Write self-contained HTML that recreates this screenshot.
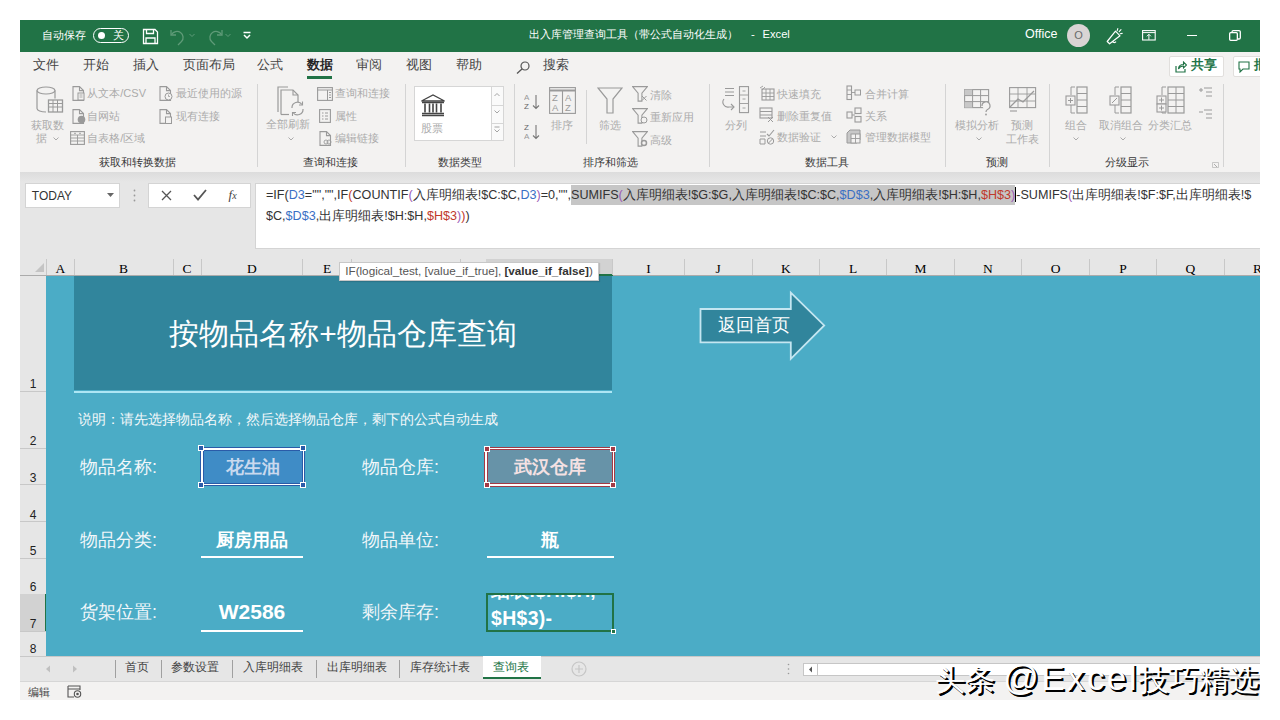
<!DOCTYPE html>
<html><head><meta charset="utf-8">
<style>
*{box-sizing:border-box;margin:0;padding:0}
html,body{width:1280px;height:720px;overflow:hidden;background:#fff;font-family:"Liberation Sans",sans-serif}
.a{position:absolute;white-space:nowrap}
#win{position:absolute;left:20px;top:20px;width:1240px;height:680px;overflow:hidden;background:#f3f2f1}
#title{position:absolute;left:0;top:0;width:1240px;height:32px;background:#217346;color:#fff}
#tabs{position:absolute;left:0;top:32px;width:1240px;height:28px;background:#f3f2f1;color:#444;font-size:12.5px}
#ribbon{position:absolute;left:0;top:60px;width:1240px;height:92px;background:#f3f2f1;color:#a6a6a6;font-size:11.5px}
.gl{position:absolute;color:#444;font-size:11.5px;top:75px}
.sep{position:absolute;width:1px;background:#d4d4d4;top:4px;height:83px}
#fbar{position:absolute;left:0;top:152px;width:1240px;height:104px;background:#e6e6e6}
#colh{position:absolute;left:0;top:239px;width:1240px;height:17px;background:#e6e6e6;font-family:"Liberation Serif",serif;font-size:13.5px;color:#000}
#grid{position:absolute;left:26px;top:256px;width:1214px;height:380px;background:#4bacc6;overflow:hidden}
#rowh{position:absolute;left:0;top:256px;width:26px;height:380px;background:#e6e6e6;font-size:12px;color:#222}
#stabs{position:absolute;left:0;top:636px;width:1240px;height:26px;background:#e6e6e6;font-size:12.5px;color:#444}
#status{position:absolute;left:0;top:662px;width:1240px;height:18px;background:#f3f2f1;font-size:11.5px;color:#444}
</style></head><body>
<div id="win">
  <div id="title">
    <div class="a" style="left:21.5px;top:7.5px;font-size:11.3px;line-height:15px">自动保存</div>
    <div class="a" style="left:73px;top:7.5px;width:36px;height:15px;border:1.3px solid #fff;border-radius:8px"></div>
    <div class="a" style="left:78px;top:11.5px;width:7px;height:7px;background:#fff;border-radius:50%"></div>
    <div class="a" style="left:93px;top:8px;font-size:11px;line-height:14px">关</div>
    <svg class="a" style="left:122px;top:8px" width="17" height="17" viewBox="0 0 17 17"><path d="M1.5 1.5h11.5l2.5 2.5v11.5h-14z" fill="none" stroke="#fff" stroke-width="1.3"/><path d="M4.5 1.5v4h7v-4M4 15.5v-5.5h9v5.5" fill="none" stroke="#fff" stroke-width="1.3"/></svg>
    <svg class="a" style="left:148px;top:8px" width="20" height="18" viewBox="0 0 20 18"><path d="M3 2v5h5" fill="none" stroke="#5f9b78" stroke-width="1.3"/><path d="M3.5 6.5c2-3 6-4 9-2s3.5 6.5 1 9l-3.5 3.5" fill="none" stroke="#5f9b78" stroke-width="1.3"/></svg>
    <svg class="a" style="left:169px;top:13px" width="6" height="5" viewBox="0 0 6 5"><path d="M0.5 1l2.5 2.5 2.5-2.5" fill="none" stroke="#5f9b78" stroke-width="1"/></svg>
    <svg class="a" style="left:185px;top:8px" width="20" height="18" viewBox="0 0 20 18"><path d="M17 2v5h-5" fill="none" stroke="#5f9b78" stroke-width="1.3"/><path d="M16.5 6.5c-2-3-6-4-9-2s-3.5 6.5-1 9l3.5 3.5" fill="none" stroke="#5f9b78" stroke-width="1.3"/></svg>
    <svg class="a" style="left:205px;top:13px" width="6" height="5" viewBox="0 0 6 5"><path d="M0.5 1l2.5 2.5 2.5-2.5" fill="none" stroke="#5f9b78" stroke-width="1"/></svg>
    <svg class="a" style="left:223px;top:11px" width="8" height="9" viewBox="0 0 8 9"><path d="M0.5 1.5h7M1 4l3 3 3-3" fill="none" stroke="#fff" stroke-width="1.5"/></svg>
    <div class="a" style="left:508.5px;top:7px;font-size:11.3px;line-height:15px">出入库管理查询工具（带公式自动化生成）</div><div class="a" style="left:731px;top:7px;font-size:11.5px;line-height:15px">-</div><div class="a" style="left:742.5px;top:7px;font-size:11.2px;line-height:15px">Excel</div>
    <div class="a" style="left:1005px;top:7px;font-size:12.5px;line-height:15px">Office</div>
    <div class="a" style="left:1047px;top:4px;width:23px;height:23px;border-radius:50%;background:#d9d4d4"></div>
    <div class="a" style="left:1047px;top:8px;width:23px;text-align:center;font-size:11px;line-height:15px;color:#6b6b6b">O</div>
    <svg class="a" style="left:1086px;top:8px" width="18" height="18" viewBox="0 0 18 18"><path d="M1.2 13.5L9.5 3.2L14 7.8L3.6 15.8Z" fill="none" stroke="#fff" stroke-width="1.2" stroke-linejoin="round"/><path d="M6.5 13.2a2 2 0 0 0 3.5 0.5" fill="none" stroke="#fff" stroke-width="1.2"/><path d="M11.2 2.6L11.8 0.6M13.2 3.6L15 1.6M14.2 5.8L16.2 5.4" stroke="#fff" stroke-width="1.1" stroke-linecap="round"/></svg>
    <svg class="a" style="left:1122px;top:10px" width="14" height="11" viewBox="0 0 14 11"><rect x="0.6" y="0.6" width="12.6" height="9.4" fill="none" stroke="#fff" stroke-width="1.1"/><path d="M0.6 2.6h12.6M6.9 9.8v-5.5M4.9 6.3l2-2 2 2" fill="none" stroke="#fff" stroke-width="1"/></svg>
    <div class="a" style="left:1167px;top:15px;width:10px;height:1.3px;background:#fff"></div>
    <svg class="a" style="left:1209px;top:10px" width="12" height="11" viewBox="0 0 12 11"><rect x="0.65" y="2.65" width="7.7" height="7.7" rx="1" fill="none" stroke="#fff" stroke-width="1.3"/><path d="M3 2.5v-0.5a1.3 1.3 0 0 1 1.3-1.3h5.7a1.3 1.3 0 0 1 1.3 1.3v5.7a1.3 1.3 0 0 1-1.3 1.3h-1" fill="none" stroke="#fff" stroke-width="1.3"/></svg>
  </div>
  <div id="tabs">
    <div class="a" style="left:13px;top:5px;line-height:16px">文件</div>
    <div class="a" style="left:63px;top:5px;line-height:16px">开始</div>
    <div class="a" style="left:113px;top:5px;line-height:16px">插入</div>
    <div class="a" style="left:162.5px;top:5px;line-height:16px">页面布局</div>
    <div class="a" style="left:237px;top:5px;line-height:16px">公式</div>
    <div class="a" style="left:287px;top:5px;line-height:16px;font-weight:bold;color:#262626">数据</div>
    <div class="a" style="left:287px;top:24px;width:25px;height:2.5px;background:#217346"></div>
    <div class="a" style="left:336px;top:5px;line-height:16px">审阅</div>
    <div class="a" style="left:386px;top:5px;line-height:16px">视图</div>
    <div class="a" style="left:435.5px;top:5px;line-height:16px">帮助</div>
    <svg class="a" style="left:496px;top:9px" width="15" height="13" viewBox="0 0 15 13"><circle cx="9" cy="5" r="4" fill="none" stroke="#555" stroke-width="1.2"/><path d="M6 8l-5 4.5" stroke="#555" stroke-width="1.3"/></svg>
    <div class="a" style="left:522.5px;top:5px;line-height:16px">搜索</div>
    <div class="a" style="left:1149px;top:4px;width:55px;height:20.5px;background:#fff;border:1px solid #e1dfdd;border-radius:2px"></div>
    <svg class="a" style="left:1155px;top:9px" width="12" height="12" viewBox="0 0 12 12"><path d="M1 5v6h9v-3" fill="none" stroke="#217346" stroke-width="1.2"/><path d="M3.5 8c0-3 2-4.5 5-4.5v-2.5l3 3-3 3v-2c-2 0-4 1-5 3z" fill="none" stroke="#217346" stroke-width="1.1"/></svg>
    <div class="a" style="left:1171px;top:5px;line-height:16px;font-weight:bold;color:#217346">共享</div>
    <div class="a" style="left:1213px;top:4px;width:40px;height:20.5px;background:#fff;border:1px solid #e1dfdd;border-radius:2px"></div>
    <svg class="a" style="left:1218px;top:9px" width="12" height="12" viewBox="0 0 12 12"><path d="M1 1h10v7h-6l-3 3v-3h-1z" fill="none" stroke="#217346" stroke-width="1.1"/></svg>
    <div class="a" style="left:1234px;top:5px;line-height:16px;font-weight:bold;color:#217346">批</div>
  </div>
  <div id="ribbon">
<div class="sep" style="left:237px"></div>
<div class="sep" style="left:385px"></div>
<div class="sep" style="left:494px"></div>
<div class="sep" style="left:689px"></div>
<div class="sep" style="left:925px"></div>
<div class="sep" style="left:1029px"></div>
<div class="sep" style="left:1203px"></div>
<div class="a" style="left:566px;top:10px;width:1px;height:54px;background:#d4d4d4"></div>
<div class="a" style="left:78.8px;top:75.0px;line-height:14px;font-size:11px;color:#383838">获取和转换数据</div>
<div class="a" style="left:282.5px;top:75.0px;line-height:14px;font-size:11px;color:#383838">查询和连接</div>
<div class="a" style="left:417.5px;top:75.0px;line-height:14px;font-size:11px;color:#383838">数据类型</div>
<div class="a" style="left:562.5px;top:75.0px;line-height:14px;font-size:11px;color:#383838">排序和筛选</div>
<div class="a" style="left:784.6px;top:75.0px;line-height:14px;font-size:11px;color:#383838">数据工具</div>
<div class="a" style="left:966px;top:75.0px;line-height:14px;font-size:11px;color:#383838">预测</div>
<div class="a" style="left:1085px;top:75.0px;line-height:14px;font-size:11px;color:#383838">分级显示</div>
<svg class="a" style="left:16px;top:6px" width="28" height="31" viewBox="0 0 28 31"><ellipse cx="10" cy="4.5" rx="9" ry="3.5" fill="none" stroke="#9a9a9a" stroke-width="1.2"/><path d="M1 4.5v18c0 2 4 3.5 9 3.5" fill="none" stroke="#9a9a9a" stroke-width="1.2"/><path d="M19 4.5v8" fill="none" stroke="#9a9a9a" stroke-width="1.2"/><rect x="12.5" y="14" width="14" height="12" fill="#f3f2f1" stroke="#9a9a9a" stroke-width="1.3"/><path d="M12.5 17.5h14M12.5 21h14M17 14v12M21.5 14v12" stroke="#9a9a9a" stroke-width="1"/></svg>
<div class="a" style="left:10.6px;top:38.0px;line-height:14px;font-size:11px;color:#ababab">获取数</div>
<div class="a" style="left:15.5px;top:51.0px;line-height:14px;font-size:11px;color:#ababab">据</div>
<svg class="a" style="left:33px;top:57px" width="6" height="4" viewBox="0 0 6 4"><path d="M0.5 0.5l2.5 2.5 2.5-2.5" fill="none" stroke="#ababab" stroke-width="1"/></svg>
<svg class="a" style="left:51.5px;top:6px" width="14" height="15" viewBox="0 0 14 15"><path d="M1 0.6h6.5l4 4v9.8h-10.5z M7.5 0.6v4h4" fill="#f3f2f1" stroke="#9a9a9a" stroke-width="1.1"/><rect x="6" y="7" width="6" height="7" fill="#f3f2f1" stroke="#9a9a9a" stroke-width="1"/><path d="M7.5 9h3M7.5 11h3" stroke="#9a9a9a" stroke-width="0.8"/></svg>
<div class="a" style="left:67.3px;top:6.0px;line-height:14px;font-size:11px;color:#ababab">从文本/CSV</div>
<svg class="a" style="left:51.5px;top:28.5px" width="14" height="15" viewBox="0 0 14 15"><path d="M1 0.6h6.5l4 4v9.8h-10.5z M7.5 0.6v4h4" fill="#f3f2f1" stroke="#9a9a9a" stroke-width="1.1"/><circle cx="9.5" cy="10.5" r="3.8" fill="#9a9a9a"/></svg>
<div class="a" style="left:67.3px;top:28.6px;line-height:14px;font-size:11px;color:#ababab">自网站</div>
<svg class="a" style="left:50px;top:51px" width="15" height="14" viewBox="0 0 15 14"><rect x="0.6" y="0.6" width="13.8" height="12.8" fill="none" stroke="#9a9a9a" stroke-width="1.1"/><path d="M0.6 4h13.8M0.6 7h13.8M0.6 10h13.8M7.5 4v9.4M4 2.3h2M9 2.3h2" stroke="#9a9a9a" stroke-width="0.9"/></svg>
<div class="a" style="left:67.3px;top:51.0px;line-height:14px;font-size:11px;color:#ababab">自表格/区域</div>
<svg class="a" style="left:139px;top:6px" width="14" height="15" viewBox="0 0 14 15"><path d="M1 0.6h6.5l4 4v9.8h-10.5z M7.5 0.6v4h4" fill="#f3f2f1" stroke="#9a9a9a" stroke-width="1.1"/><circle cx="9.5" cy="10.5" r="3.5" fill="#f3f2f1" stroke="#9a9a9a" stroke-width="1"/><path d="M9.5 8.5v2h1.5" fill="none" stroke="#9a9a9a" stroke-width="0.8"/></svg>
<div class="a" style="left:155.5px;top:6.0px;line-height:14px;font-size:11px;color:#ababab">最近使用的源</div>
<svg class="a" style="left:139px;top:28.5px" width="14" height="15" viewBox="0 0 14 15"><path d="M1 0.6h6.5l4 4v9.8h-10.5z M7.5 0.6v4h4" fill="#f3f2f1" stroke="#9a9a9a" stroke-width="1.1"/><rect x="6.5" y="8" width="6" height="6.5" fill="#f3f2f1" stroke="#9a9a9a" stroke-width="1"/></svg>
<div class="a" style="left:155.5px;top:28.6px;line-height:14px;font-size:11px;color:#ababab">现有连接</div>
<svg class="a" style="left:257px;top:6px" width="29" height="30" viewBox="0 0 29 30"><path d="M1 26v-25h10" fill="none" stroke="#9a9a9a" stroke-width="1.2"/><path d="M4 28.5v-24.5h12l5 5v7" fill="#f3f2f1" stroke="#9a9a9a" stroke-width="1.2"/><path d="M16 4v5h5" fill="none" stroke="#9a9a9a" stroke-width="1.1"/><path d="M4 28.5h8" fill="none" stroke="#9a9a9a" stroke-width="1.2"/><path d="M15 22a5.5 5.5 0 0 1 10-3.5M26 23a5.5 5.5 0 0 1-10 3.5" fill="none" stroke="#9a9a9a" stroke-width="1.2"/><path d="M25.5 15.5v3.5h-3.5M15.5 30v-3.5h3.5" fill="none" stroke="#9a9a9a" stroke-width="1.1"/></svg>
<div class="a" style="left:246px;top:36.7px;line-height:14px;font-size:11px;color:#ababab">全部刷新</div>
<svg class="a" style="left:267.5px;top:57px" width="6" height="4" viewBox="0 0 6 4"><path d="M0.5 0.5l2.5 2.5 2.5-2.5" fill="none" stroke="#ababab" stroke-width="1"/></svg>
<svg class="a" style="left:296.5px;top:6.5px" width="16" height="14" viewBox="0 0 16 14"><rect x="0.6" y="0.6" width="14.8" height="12.8" fill="none" stroke="#9a9a9a" stroke-width="1.1"/><path d="M0.6 3h14.8M10.5 3v10.4M12 5.5h2M12 8h2M12 10.5h2" stroke="#9a9a9a" stroke-width="1"/></svg>
<div class="a" style="left:315px;top:6.0px;line-height:14px;font-size:11px;color:#ababab">查询和连接</div>
<svg class="a" style="left:298.5px;top:29px" width="12" height="14" viewBox="0 0 12 14"><rect x="0.6" y="0.6" width="10.8" height="12.8" fill="none" stroke="#9a9a9a" stroke-width="1.1"/><path d="M3 4h1.5M3 7h1.5M3 10h1.5M6 4h3M6 7h3M6 10h3" stroke="#9a9a9a" stroke-width="1"/></svg>
<div class="a" style="left:315px;top:28.6px;line-height:14px;font-size:11px;color:#ababab">属性</div>
<svg class="a" style="left:298.5px;top:51px" width="14" height="15" viewBox="0 0 14 15"><path d="M1 0.6h6.5l4 4v9.8h-10.5z M7.5 0.6v4h4" fill="#f3f2f1" stroke="#9a9a9a" stroke-width="1.1"/><circle cx="7" cy="11" r="2" fill="none" stroke="#9a9a9a" stroke-width="0.9"/><circle cx="10" cy="11" r="2" fill="none" stroke="#9a9a9a" stroke-width="0.9"/></svg>
<div class="a" style="left:315px;top:51.0px;line-height:14px;font-size:11px;color:#ababab">编辑链接</div>
<div class="a" style="left:393.75px;top:5.5px;width:90px;height:55.5px;background:#fff;border:1px solid #d6d6d6"></div>
<div class="a" style="left:470.5px;top:5.5px;width:13.25px;height:55.5px;border:1px solid #d6d6d6;background:#fafafa"></div>
<div class="a" style="left:470.5px;top:25px;width:13.25px;height:1px;background:#d6d6d6"></div>
<div class="a" style="left:470.5px;top:42.5px;width:13.25px;height:1px;background:#d6d6d6"></div>
<svg class="a" style="left:472px;top:9px" width="10" height="48" viewBox="0 0 10 48"><path d="M2.5 7l2.5-2.5 2.5 2.5M2.5 21.5l2.5 2.5 2.5-2.5M2.5 38h5M2.5 40.5l2.5 2.5 2.5-2.5" fill="none" stroke="#9a9a9a" stroke-width="0.9"/></svg>
<svg class="a" style="left:400px;top:13.5px" width="26" height="23" viewBox="0 0 26 23"><path d="M1.5 7l11.5-6 11.5 6z" fill="none" stroke="#444" stroke-width="1.3"/><path d="M2 8.5h22M2 21.5h22M2 19.5h22" stroke="#444" stroke-width="1.3"/><path d="M5 9.5v9M9.5 9.5v9M13 9.5v9M16.5 9.5v9M21 9.5v9" stroke="#444" stroke-width="1.6"/></svg>
<div class="a" style="left:401px;top:40.5px;line-height:14px;font-size:11px;color:#ababab">股票</div>
<svg class="a" style="left:504px;top:13px" width="17" height="48" viewBox="0 0 17 48"><text x="0" y="7" font-size="8" fill="#9a9a9a" font-family="Liberation Sans">A</text><text x="0" y="15.5" font-size="8" fill="#666" font-family="Liberation Sans">Z</text><path d="M12 2v13.5M9 12.5l3 3 3-3" fill="none" stroke="#777" stroke-width="1.1"/><text x="0" y="37" font-size="8" fill="#666" font-family="Liberation Sans">Z</text><text x="0" y="45.5" font-size="8" fill="#9a9a9a" font-family="Liberation Sans">A</text><path d="M12 32v13.5M9 42.5l3 3 3-3" fill="none" stroke="#777" stroke-width="1.1"/></svg>
<svg class="a" style="left:529px;top:7px" width="27" height="27" viewBox="0 0 27 27"><rect x="0.6" y="0.6" width="25.8" height="25.8" fill="none" stroke="#9a9a9a" stroke-width="1.1"/><path d="M0.6 3.5h25.8" stroke="#9a9a9a" stroke-width="2"/><path d="M13.5 3.5v23" stroke="#9a9a9a" stroke-width="1.1"/><text x="3" y="14" font-size="9.5" fill="#9a9a9a" font-family="Liberation Sans">Z</text><text x="3" y="24" font-size="9.5" fill="#9a9a9a" font-family="Liberation Sans">A</text><text x="16" y="14" font-size="9.5" fill="#9a9a9a" font-family="Liberation Sans">A</text><text x="16" y="24" font-size="9.5" fill="#9a9a9a" font-family="Liberation Sans">Z</text></svg>
<div class="a" style="left:531px;top:38.0px;line-height:14px;font-size:11px;color:#ababab">排序</div>
<svg class="a" style="left:577px;top:7px" width="26" height="27" viewBox="0 0 26 27"><path d="M1 1h24l-9 11v14h-6v-14z" fill="none" stroke="#9a9a9a" stroke-width="1.2"/></svg>
<div class="a" style="left:579px;top:38.0px;line-height:14px;font-size:11px;color:#ababab">筛选</div>
<svg class="a" style="left:612px;top:6px" width="16" height="16" viewBox="0 0 16 16"><path d="M0.6 0.6h14.8l-5.5 6.5v8h-3.8v-8z" fill="none" stroke="#9a9a9a" stroke-width="1.1"/><path d="M10 10l4.5 4.5M14.5 10l-4.5 4.5" stroke="#9a9a9a" stroke-width="1"/></svg>
<div class="a" style="left:630px;top:8.0px;line-height:14px;font-size:11px;color:#ababab">清除</div>
<svg class="a" style="left:612px;top:28px" width="16" height="16" viewBox="0 0 16 16"><path d="M0.6 0.6h14.8l-5.5 6.5v8h-3.8v-8z" fill="none" stroke="#9a9a9a" stroke-width="1.1"/><circle cx="12" cy="12" r="3" fill="#f3f2f1" stroke="#9a9a9a" stroke-width="1"/></svg>
<div class="a" style="left:630px;top:30.0px;line-height:14px;font-size:11px;color:#ababab">重新应用</div>
<svg class="a" style="left:612px;top:51px" width="16" height="16" viewBox="0 0 16 16"><path d="M0.6 0.6h14.8l-5.5 6.5v8h-3.8v-8z" fill="none" stroke="#9a9a9a" stroke-width="1.1"/><circle cx="12" cy="12" r="2.5" fill="#f3f2f1" stroke="#9a9a9a" stroke-width="1.5"/></svg>
<div class="a" style="left:630px;top:53.0px;line-height:14px;font-size:11px;color:#ababab">高级</div>
<svg class="a" style="left:700px;top:6px" width="31" height="29" viewBox="0 0 31 29"><path d="M5 2.5h9M5 6h9M5 9.5h9" stroke="#9a9a9a" stroke-width="1.1"/><path d="M4 13a5 5 0 0 0 5 8h5" fill="none" stroke="#9a9a9a" stroke-width="1.1"/><path d="M11 18l3 3-3 3" fill="none" stroke="#9a9a9a" stroke-width="1.1"/><rect x="19.5" y="0.6" width="9" height="26" fill="none" stroke="#9a9a9a" stroke-width="1.1"/><path d="M19.5 9h9M19.5 17.5h9M22.5 5h3M22.5 13h3M22.5 22h3" stroke="#9a9a9a" stroke-width="0.9"/></svg>
<div class="a" style="left:705px;top:37.7px;line-height:14px;font-size:11px;color:#ababab">分列</div>
<svg class="a" style="left:739px;top:5px" width="16" height="16" viewBox="0 0 16 16"><rect x="3" y="4" width="12" height="11" fill="none" stroke="#9a9a9a" stroke-width="1.1"/><path d="M3 8h12M3 11.5h12M7 4v11M11 4v11M1 3l3-2M3 5l3-3" stroke="#9a9a9a" stroke-width="0.9"/></svg>
<div class="a" style="left:757px;top:6.8px;line-height:14px;font-size:11px;color:#ababab">快速填充</div>
<svg class="a" style="left:739px;top:27px" width="16" height="16" viewBox="0 0 16 16"><rect x="1" y="1" width="12" height="10" fill="none" stroke="#9a9a9a" stroke-width="1.1"/><path d="M1 4.5h12M1 8h12M9 10l5 5M14 10l-5 5" stroke="#9a9a9a" stroke-width="1"/></svg>
<div class="a" style="left:757px;top:28.5px;line-height:14px;font-size:11px;color:#ababab">删除重复值</div>
<svg class="a" style="left:739px;top:49px" width="16" height="16" viewBox="0 0 16 16"><path d="M1 3h6M1 7h6M1 10v5h5v-5z" fill="none" stroke="#9a9a9a" stroke-width="1"/><path d="M8 5l2 2 5-6" fill="none" stroke="#9a9a9a" stroke-width="1.1"/><circle cx="11.5" cy="12" r="3.2" fill="none" stroke="#9a9a9a" stroke-width="1"/><path d="M9.5 14l4-4" stroke="#9a9a9a" stroke-width="1"/></svg>
<div class="a" style="left:757px;top:50.0px;line-height:14px;font-size:11px;color:#ababab">数据验证</div>
<svg class="a" style="left:811px;top:55px" width="6" height="4" viewBox="0 0 6 4"><path d="M0.5 0.5l2.5 2.5 2.5-2.5" fill="none" stroke="#ababab" stroke-width="1"/></svg>
<svg class="a" style="left:826px;top:5px" width="16" height="16" viewBox="0 0 16 16"><rect x="1" y="1" width="4.5" height="13.5" fill="none" stroke="#9a9a9a" stroke-width="1.1"/><path d="M1 5h4.5M1 9.5h4.5" stroke="#9a9a9a" stroke-width="0.9"/><rect x="9" y="5" width="5.5" height="5" fill="none" stroke="#9a9a9a" stroke-width="1"/><path d="M5.5 7.5h3.5" stroke="#9a9a9a" stroke-width="0.9"/></svg>
<div class="a" style="left:844.5px;top:6.8px;line-height:14px;font-size:11px;color:#ababab">合并计算</div>
<svg class="a" style="left:826px;top:27px" width="16" height="16" viewBox="0 0 16 16"><rect x="1" y="5" width="5" height="6" fill="none" stroke="#9a9a9a" stroke-width="1.1"/><rect x="9" y="1" width="6" height="5.5" fill="none" stroke="#9a9a9a" stroke-width="1.1"/><rect x="9" y="9.5" width="6" height="5.5" fill="none" stroke="#9a9a9a" stroke-width="1.1"/><path d="M6 8h3" stroke="#9a9a9a" stroke-width="1"/></svg>
<div class="a" style="left:844.5px;top:28.5px;line-height:14px;font-size:11px;color:#ababab">关系</div>
<svg class="a" style="left:826px;top:49px" width="16" height="16" viewBox="0 0 16 16"><path d="M1 14v-10l3-3h10v10l-3 3z" fill="#c8c8c8" stroke="#9a9a9a" stroke-width="1"/><rect x="5" y="5" width="9" height="9" fill="#f3f2f1" stroke="#9a9a9a" stroke-width="1"/><path d="M5 9.5h9M9.5 5v9" stroke="#9a9a9a" stroke-width="0.9"/></svg>
<div class="a" style="left:844.5px;top:50.0px;line-height:14px;font-size:11px;color:#ababab">管理数据模型</div>
<svg class="a" style="left:944px;top:9px" width="30" height="27" viewBox="0 0 30 27"><rect x="0.6" y="0.6" width="24" height="18" fill="none" stroke="#9a9a9a" stroke-width="1.1"/><rect x="0.6" y="0.6" width="8" height="6" fill="#c8c8c8"/><rect x="0.6" y="12.6" width="8" height="6" fill="#c8c8c8"/><path d="M0.6 6.6h24M0.6 12.6h24M8.6 0.6v18M16.6 0.6v18" stroke="#9a9a9a" stroke-width="1"/><path d="M18 17a4 4 0 1 1 5.5 3.5c-1 .5-1.5 1-1.5 2.5" fill="#f3f2f1" stroke="#9a9a9a" stroke-width="1.2"/><circle cx="22" cy="25.5" r="0.9" fill="#9a9a9a"/></svg>
<div class="a" style="left:935px;top:38.0px;line-height:14px;font-size:11px;color:#ababab">模拟分析</div>
<svg class="a" style="left:955.5px;top:57px" width="6" height="4" viewBox="0 0 6 4"><path d="M0.5 0.5l2.5 2.5 2.5-2.5" fill="none" stroke="#ababab" stroke-width="1"/></svg>
<svg class="a" style="left:989px;top:7px" width="28" height="26" viewBox="0 0 28 26"><rect x="0.6" y="0.6" width="26" height="20" fill="none" stroke="#9a9a9a" stroke-width="1.1"/><path d="M0.6 7h26M0.6 14h26M9 0.6v20M18 0.6v20" stroke="#9a9a9a" stroke-width="0.9"/><path d="M1 20l8-8 5 3 11-11" fill="none" stroke="#9a9a9a" stroke-width="1.3"/><path d="M1 24h7" stroke="#9a9a9a" stroke-width="1.1"/></svg>
<div class="a" style="left:991px;top:38.0px;line-height:14px;font-size:11px;color:#ababab">预测</div>
<div class="a" style="left:986px;top:52.0px;line-height:14px;font-size:11px;color:#ababab">工作表</div>
<svg class="a" style="left:1045px;top:6px" width="24" height="28" viewBox="0 0 24 28"><path d="M6 1h4M6 27h4M6 1v8M6 19v8" fill="none" stroke="#9a9a9a" stroke-width="1"/><rect x="12" y="1" width="10" height="26" fill="none" stroke="#9a9a9a" stroke-width="1.2"/><path d="M12 7.5h10M12 14h10M12 20.5h10" stroke="#9a9a9a" stroke-width="1"/><rect x="1" y="10" width="9" height="9" fill="#f3f2f1" stroke="#9a9a9a" stroke-width="1.1"/><path d="M3 14.5h5M5.5 12v5" stroke="#9a9a9a" stroke-width="1"/></svg>
<div class="a" style="left:1045px;top:38.0px;line-height:14px;font-size:11px;color:#ababab">组合</div>
<svg class="a" style="left:1053px;top:57px" width="6" height="4" viewBox="0 0 6 4"><path d="M0.5 0.5l2.5 2.5 2.5-2.5" fill="none" stroke="#ababab" stroke-width="1"/></svg>
<svg class="a" style="left:1089px;top:6px" width="24" height="28" viewBox="0 0 24 28"><path d="M6 1h4M6 27h4M6 1v8M6 19v8" fill="none" stroke="#9a9a9a" stroke-width="1"/><rect x="12" y="1" width="10" height="26" fill="none" stroke="#9a9a9a" stroke-width="1.2"/><path d="M12 7.5h10M12 14h10M12 20.5h10" stroke="#9a9a9a" stroke-width="1"/><rect x="1" y="10" width="9" height="9" fill="#f3f2f1" stroke="#9a9a9a" stroke-width="1.1"/><path d="M3 17l5-5" stroke="#9a9a9a" stroke-width="1"/></svg>
<div class="a" style="left:1079px;top:38.0px;line-height:14px;font-size:11px;color:#ababab">取消组合</div>
<svg class="a" style="left:1100px;top:57px" width="6" height="4" viewBox="0 0 6 4"><path d="M0.5 0.5l2.5 2.5 2.5-2.5" fill="none" stroke="#ababab" stroke-width="1"/></svg>
<svg class="a" style="left:1136px;top:6px" width="29" height="28" viewBox="0 0 29 28"><path d="M6 1h4M6 27h4M6 1v8M6 19v8" fill="none" stroke="#9a9a9a" stroke-width="1"/><rect x="12" y="1" width="16" height="26" fill="none" stroke="#9a9a9a" stroke-width="1.2"/><path d="M12 7.5h16M12 14h16M12 20.5h16M20 1v26" stroke="#9a9a9a" stroke-width="1"/><rect x="1" y="10" width="9" height="8" fill="#f3f2f1" stroke="#9a9a9a" stroke-width="1.1"/><rect x="1" y="18" width="9" height="8" fill="#f3f2f1" stroke="#9a9a9a" stroke-width="1.1"/><path d="M3 14h5M5.5 11.5v5M3 22h5M5.5 19.5v5" stroke="#9a9a9a" stroke-width="1"/></svg>
<div class="a" style="left:1127.5px;top:38.0px;line-height:14px;font-size:11px;color:#ababab">分类汇总</div>
<svg class="a" style="left:1178px;top:6px" width="15" height="36" viewBox="0 0 15 36"><path d="M1 4h4M3 2v4M6 2h8M8 6h6M8 10h6" stroke="#9a9a9a" stroke-width="1"/><path d="M1 26h4M6 24h8M8 28h6M8 32h6" stroke="#9a9a9a" stroke-width="1"/></svg>
<svg class="a" style="left:1192px;top:82px" width="7" height="6" viewBox="0 0 7 6"><path d="M0.5 0.5h6v5h-6z" fill="none" stroke="#bbb" stroke-width="0.8"/><path d="M2 2l3 3" stroke="#999" stroke-width="0.8"/></svg>
  </div><!--/ribbon-->
  <div id="fbar">
<div class="a" style="left:0;top:0;width:1240px;height:10px;background:linear-gradient(#dcdcdc,#e6e6e6)"></div>
<div class="a" style="left:5px;top:10.6px;width:94.5px;height:25.6px;background:#fff;border:1px solid #d4d4d4"></div>
<div class="a" style="left:11.8px;top:15.5px;font-size:12px;line-height:16px;color:#333">TODAY</div>
<svg class="a" style="left:87px;top:20.5px" width="7" height="5" viewBox="0 0 7 5"><path d="M0 0h7l-3.5 4z" fill="#666"/></svg>
<svg class="a" style="left:113px;top:17px" width="3" height="13" viewBox="0 0 3 13"><circle cx="1.5" cy="1.5" r="0.9" fill="#999"/><circle cx="1.5" cy="6.5" r="0.9" fill="#999"/><circle cx="1.5" cy="11.5" r="0.9" fill="#999"/></svg>
<div class="a" style="left:128.4px;top:10.6px;width:102.6px;height:25.6px;background:#fff;border:1px solid #d4d4d4"></div>
<svg class="a" style="left:140.5px;top:17.5px" width="11" height="11" viewBox="0 0 11 11"><path d="M1 1l9 9M10 1l-9 9" stroke="#555" stroke-width="1.3"/></svg>
<svg class="a" style="left:173px;top:17px" width="14" height="12" viewBox="0 0 14 12"><path d="M1 6l4 4.5 8-9.5" fill="none" stroke="#555" stroke-width="1.8"/></svg>
<div class="a" style="left:208.5px;top:15px;font-family:'Liberation Serif',serif;font-style:italic;font-size:13px;line-height:16px;color:#444">f<span style="font-size:10px">x</span></div>
<div class="a" style="left:234.6px;top:10.6px;width:1010px;height:66.6px;background:#fff;border:1px solid #d4d4d4"></div>
<div class="a" id="fl1" style="left:246px;top:13.4px;font-size:12.6px;line-height:20px;color:#333">=IF(<span style="color:#3a6fc4">D3</span>="","",IF<span style="color:#c0392b">(</span>COUNTIF<span style="color:#9b59b6">(</span>入库明细表!$C:$C,<span style="color:#3a6fc4">D3</span><span style="color:#9b59b6">)</span>=0,"",<span style="background:#c6c6c6;padding:3px 0">SUMIFS<span style="color:#9b59b6">(</span>入库明细表!$G:$G,入库明细表!$C:$C,<span style="color:#3a6fc4">$D$3</span>,入库明细表!$H:$H,<span style="color:#c0392b">$H$3</span><span style="color:#9b59b6">)</span></span><span style="display:inline-block;width:1px;height:15px;background:#000;vertical-align:-3px"></span>-SUMIFS<span style="color:#9b59b6">(</span>出库明细表!$F:$F,出库明细表!$</div>
<div class="a" id="fl2" style="left:246px;top:33.7px;font-size:12.6px;line-height:20px;color:#333">$C,<span style="color:#3a6fc4">$D$3</span>,出库明细表!$H:$H,<span style="color:#c0392b">$H$3</span><span style="color:#9b59b6">)</span><span style="color:#c0392b">)</span>)</div>
  </div><!--/fbar-->
  <div id="colh">
<div class="a" style="left:0;top:16px;width:1240px;height:1px;background:#ababab"></div>
<svg class="a" style="left:15px;top:4px" width="9" height="9" viewBox="0 0 9 9"><path d="M9 0v9h-9z" fill="#c4c4c4"/></svg>
<div class="a" style="left:53.5px;top:0;width:1px;height:16px;background:#c8c8c8"></div>
<div class="a" style="left:26.8px;top:2px;width:27.2px;text-align:center;line-height:16px">A</div>
<div class="a" style="left:152.5px;top:0;width:1px;height:16px;background:#c8c8c8"></div>
<div class="a" style="left:54.0px;top:2px;width:99.0px;text-align:center;line-height:16px">B</div>
<div class="a" style="left:180.5px;top:0;width:1px;height:16px;background:#c8c8c8"></div>
<div class="a" style="left:153.0px;top:2px;width:28.0px;text-align:center;line-height:16px">C</div>
<div class="a" style="left:282.0px;top:0;width:1px;height:16px;background:#c8c8c8"></div>
<div class="a" style="left:181.0px;top:2px;width:101.5px;text-align:center;line-height:16px">D</div>
<div class="a" style="left:331.0px;top:0;width:1px;height:16px;background:#c8c8c8"></div>
<div class="a" style="left:282.5px;top:2px;width:49.0px;text-align:center;line-height:16px">E</div>
<div class="a" style="left:439.5px;top:0;width:1px;height:16px;background:#c8c8c8"></div>
<div class="a" style="left:331.5px;top:2px;width:108.5px;text-align:center;line-height:16px">F</div>
<div class="a" style="left:465.5px;top:0;width:1px;height:16px;background:#c8c8c8"></div>
<div class="a" style="left:440.0px;top:2px;width:26.0px;text-align:center;line-height:16px">G</div>
<div class="a" style="left:466.0px;top:0;width:126.5px;height:16px;background:#d2d2d2"></div>
<div class="a" style="left:466.0px;top:14.5px;width:126.5px;height:2px;background:#217346"></div>
<div class="a" style="left:592.0px;top:0;width:1px;height:16px;background:#c8c8c8"></div>
<div class="a" style="left:466.0px;top:2px;width:126.5px;text-align:center;line-height:16px">H</div>
<div class="a" style="left:664.0px;top:0;width:1px;height:16px;background:#c8c8c8"></div>
<div class="a" style="left:592.5px;top:2px;width:72.0px;text-align:center;line-height:16px">I</div>
<div class="a" style="left:731.5px;top:0;width:1px;height:16px;background:#c8c8c8"></div>
<div class="a" style="left:664.5px;top:2px;width:67.5px;text-align:center;line-height:16px">J</div>
<div class="a" style="left:799.1px;top:0;width:1px;height:16px;background:#c8c8c8"></div>
<div class="a" style="left:732.0px;top:2px;width:67.6px;text-align:center;line-height:16px">K</div>
<div class="a" style="left:866.3px;top:0;width:1px;height:16px;background:#c8c8c8"></div>
<div class="a" style="left:799.6px;top:2px;width:67.2px;text-align:center;line-height:16px">L</div>
<div class="a" style="left:933.7px;top:0;width:1px;height:16px;background:#c8c8c8"></div>
<div class="a" style="left:866.8px;top:2px;width:67.4px;text-align:center;line-height:16px">M</div>
<div class="a" style="left:1001.2px;top:0;width:1px;height:16px;background:#c8c8c8"></div>
<div class="a" style="left:934.2px;top:2px;width:67.5px;text-align:center;line-height:16px">N</div>
<div class="a" style="left:1069.0px;top:0;width:1px;height:16px;background:#c8c8c8"></div>
<div class="a" style="left:1001.7px;top:2px;width:67.8px;text-align:center;line-height:16px">O</div>
<div class="a" style="left:1136.0px;top:0;width:1px;height:16px;background:#c8c8c8"></div>
<div class="a" style="left:1069.5px;top:2px;width:67.0px;text-align:center;line-height:16px">P</div>
<div class="a" style="left:1203.5px;top:0;width:1px;height:16px;background:#c8c8c8"></div>
<div class="a" style="left:1136.5px;top:2px;width:67.5px;text-align:center;line-height:16px">Q</div>
<div class="a" style="left:1270.5px;top:0;width:1px;height:16px;background:#c8c8c8"></div>
<div class="a" style="left:1204.0px;top:2px;width:67.0px;text-align:center;line-height:16px">R</div>
<div class="a" style="left:26.25px;top:0;width:1px;height:16px;background:#c8c8c8"></div>
  </div><!--/colh-->
  <div id="rowh">
<div class="a" style="left:25.75px;top:0;width:1px;height:380px;background:#ababab"></div>
<div class="a" style="left:0;top:114.9px;width:26px;height:1px;background:#c8c8c8"></div>
<div class="a" style="left:0;top:100.4px;width:26px;text-align:center;line-height:16px">1</div>
<div class="a" style="left:0;top:171.5px;width:26px;height:1px;background:#c8c8c8"></div>
<div class="a" style="left:0;top:157.0px;width:26px;text-align:center;line-height:16px">2</div>
<div class="a" style="left:0;top:208.2px;width:26px;height:1px;background:#c8c8c8"></div>
<div class="a" style="left:0;top:193.7px;width:26px;text-align:center;line-height:16px">3</div>
<div class="a" style="left:0;top:245.0px;width:26px;height:1px;background:#c8c8c8"></div>
<div class="a" style="left:0;top:230.5px;width:26px;text-align:center;line-height:16px">4</div>
<div class="a" style="left:0;top:281.5px;width:26px;height:1px;background:#c8c8c8"></div>
<div class="a" style="left:0;top:267.0px;width:26px;text-align:center;line-height:16px">5</div>
<div class="a" style="left:0;top:317.8px;width:26px;height:1px;background:#c8c8c8"></div>
<div class="a" style="left:0;top:303.3px;width:26px;text-align:center;line-height:16px">6</div>
<div class="a" style="left:0;top:318.3px;width:26px;height:36.7px;background:#d2d2d2"></div>
<div class="a" style="left:24.5px;top:318.3px;width:2px;height:36.7px;background:#217346"></div>
<div class="a" style="left:0;top:354.5px;width:26px;height:1px;background:#c8c8c8"></div>
<div class="a" style="left:0;top:340.0px;width:26px;text-align:center;line-height:16px">7</div>
<div class="a" style="left:0;top:379.5px;width:26px;height:1px;background:#c8c8c8"></div>
<div class="a" style="left:0;top:365.0px;width:26px;text-align:center;line-height:16px">8</div>
  </div><!--/rowh-->
  <div id="grid">
<div class="a" style="left:28px;top:0;width:538px;height:113.5px;background:#31859c"></div>
<div class="a" style="left:28px;top:114.6px;width:538px;height:2.4px;background:#ade6f4"></div>
<div class="a" style="left:28px;top:40px;width:538px;text-align:center;font-size:30px;line-height:36px;color:#fff">按物品名称+物品仓库查询</div>
<div class="a" style="left:31.7px;top:134px;font-size:14px;line-height:18px;color:#f4f8fa">说明：请先选择物品名称，然后选择物品仓库，剩下的公式自动生成</div>
<div class="a" style="left:34px;top:179px;font-size:18px;line-height:24px;color:#f2f7fa">物品名称:</div>
<div class="a" style="left:316px;top:179px;font-size:18px;line-height:24px;color:#f2f7fa">物品仓库:</div>
<div class="a" style="left:34px;top:252px;font-size:18px;line-height:24px;color:#f2f7fa">物品分类:</div>
<div class="a" style="left:316px;top:252px;font-size:18px;line-height:24px;color:#f2f7fa">物品单位:</div>
<div class="a" style="left:34px;top:324px;font-size:18px;line-height:24px;color:#f2f7fa">货架位置:</div>
<div class="a" style="left:316px;top:324px;font-size:18px;line-height:24px;color:#f2f7fa">剩余库存:</div>
<div class="a" style="left:154px;top:171px;width:105px;height:39px;background:#2a5ba8"></div>
<div class="a" style="left:155px;top:172px;width:103px;height:37px;background:#fff"></div>
<div class="a" style="left:156.5px;top:173.5px;width:100px;height:34px;background:#2a5ba8"></div>
<div class="a" style="left:157.5px;top:174.5px;width:98px;height:32px;background:#3f8cc6"></div>
<div class="a" style="left:152.4px;top:169.3px;width:6px;height:6px;background:#2a5ba8;border:1px solid #fff"></div>
<div class="a" style="left:254px;top:169.3px;width:6px;height:6px;background:#2a5ba8;border:1px solid #fff"></div>
<div class="a" style="left:152.4px;top:205.5px;width:6px;height:6px;background:#2a5ba8;border:1px solid #fff"></div>
<div class="a" style="left:254px;top:205.5px;width:6px;height:6px;background:#2a5ba8;border:1px solid #fff"></div>
<div class="a" style="left:154px;top:179px;width:105px;text-align:center;font-size:18px;line-height:24px;font-weight:bold;color:#c9d9ee">花生油</div>
<div class="a" style="left:438px;top:170.5px;width:131px;height:40px;background:#a33a45"></div>
<div class="a" style="left:439px;top:171.5px;width:129px;height:38px;background:#fff"></div>
<div class="a" style="left:440.5px;top:173px;width:126px;height:35px;background:#a33a45"></div>
<div class="a" style="left:441.5px;top:174px;width:124px;height:33px;background:#6793a8"></div>
<div class="a" style="left:438.2px;top:169.5px;width:6px;height:6px;background:#a33a45;border:1px solid #fff"></div>
<div class="a" style="left:563.6px;top:169.5px;width:6px;height:6px;background:#a33a45;border:1px solid #fff"></div>
<div class="a" style="left:438.2px;top:205.6px;width:6px;height:6px;background:#a33a45;border:1px solid #fff"></div>
<div class="a" style="left:563.6px;top:205.6px;width:6px;height:6px;background:#a33a45;border:1px solid #fff"></div>
<div class="a" style="left:438px;top:179px;width:131px;text-align:center;font-size:18px;line-height:24px;font-weight:bold;color:#f4e1e3">武汉仓库</div>
<div class="a" style="left:155px;top:252px;width:102px;text-align:center;font-size:18px;line-height:24px;font-weight:bold;color:#fff">厨房用品</div>
<div class="a" style="left:155px;top:280.2px;width:102px;height:2px;background:#fff"></div>
<div class="a" style="left:440.8px;top:252px;width:127px;text-align:center;font-size:18px;line-height:24px;font-weight:bold;color:#fff">瓶</div>
<div class="a" style="left:440.8px;top:280.2px;width:127px;height:2px;background:#fff"></div>
<div class="a" style="left:155px;top:324px;width:102px;text-align:center;font-size:21px;line-height:24px;font-weight:bold;color:#fff">W2586</div>
<div class="a" style="left:155px;top:354px;width:102px;height:2px;background:#fff"></div>
<div class="a" style="left:440px;top:317.1px;width:127.75px;height:38.8px;border:2px solid #217346;overflow:hidden"><div class="a" style="left:3px;top:-17px;font-size:19px;line-height:26px;font-weight:bold;color:#fff">细表!$H:$H,</div><div class="a" style="left:3px;top:9.5px;font-size:19.5px;line-height:26px;font-weight:bold;color:#fff;letter-spacing:0.3px">$H$3)-</div></div>
<div class="a" style="left:564.5px;top:352.5px;width:5px;height:5px;background:#217346;border:1px solid #fff"></div>
<svg class="a" style="left:640px;top:0px" width="160" height="100" viewBox="640 0 160 100"><path d="M654.5 33H744.8V16.6L778.2 49.4L744.8 82.8V66.4H654.5Z" fill="#31859c" stroke="#c4e6f1" stroke-width="1.8" stroke-linejoin="miter"/></svg>
<div class="a" style="left:672px;top:37.8px;font-size:17.5px;line-height:22px;color:#fff">返回首页</div>
  </div><!--/grid-->
  <div id="stabs">
<div class="a" style="left:0;top:0;width:1240px;height:1px;background:#c8c8c8"></div>
<svg class="a" style="left:25px;top:9px" width="6" height="8" viewBox="0 0 6 8"><path d="M5 0.5v7l-4-3.5z" fill="#c0c0c0"/></svg>
<svg class="a" style="left:52px;top:9px" width="6" height="8" viewBox="0 0 6 8"><path d="M1 0.5v7l4-3.5z" fill="#c0c0c0"/></svg>
<div class="a" style="left:94.5px;top:3.5px;width:1px;height:18.5px;background:#a0a0a0"></div>
<div class="a" style="left:141px;top:3.5px;width:1px;height:18.5px;background:#a0a0a0"></div>
<div class="a" style="left:212px;top:3.5px;width:1px;height:18.5px;background:#a0a0a0"></div>
<div class="a" style="left:295.5px;top:3.5px;width:1px;height:18.5px;background:#a0a0a0"></div>
<div class="a" style="left:379px;top:3.5px;width:1px;height:18.5px;background:#a0a0a0"></div>
<div class="a" style="left:105px;top:3px;line-height:16px;font-size:12px">首页</div>
<div class="a" style="left:151px;top:3px;line-height:16px;font-size:12px">参数设置</div>
<div class="a" style="left:222.5px;top:3px;line-height:16px;font-size:12px">入库明细表</div>
<div class="a" style="left:307px;top:3px;line-height:16px;font-size:12px">出库明细表</div>
<div class="a" style="left:389.5px;top:3px;line-height:16px;font-size:12px">库存统计表</div>
<div class="a" style="left:462.5px;top:0;width:58px;height:22px;background:#fff"></div>
<div class="a" style="left:462.5px;top:20.5px;width:58px;height:2px;background:#217346"></div>
<div class="a" style="left:473px;top:3px;line-height:16px;font-size:12px;color:#217346">查询表</div>
<svg class="a" style="left:551px;top:5px" width="16" height="16" viewBox="0 0 16 16"><circle cx="8" cy="8" r="7" fill="none" stroke="#c6c6c6" stroke-width="1.2"/><path d="M4 8h8M8 4v8" stroke="#c6c6c6" stroke-width="1.2"/></svg>
<svg class="a" style="left:767px;top:7px" width="3" height="12" viewBox="0 0 3 12"><circle cx="1.5" cy="1.5" r="0.8" fill="#999"/><circle cx="1.5" cy="6" r="0.8" fill="#999"/><circle cx="1.5" cy="10.5" r="0.8" fill="#999"/></svg>
<div class="a" style="left:783px;top:7px;width:460px;height:13px;background:#fff;border:1px solid #c6c6c6"></div>
<div class="a" style="left:783px;top:7px;width:15px;height:13px;border:1px solid #c6c6c6"></div>
<svg class="a" style="left:788px;top:10px" width="5" height="7" viewBox="0 0 5 7"><path d="M4 0.5v6l-3-3z" fill="#555"/></svg>
<div class="a" style="left:0;top:25px;width:1240px;height:1px;background:#d6d6d6"></div>
  </div><!--/stabs-->
  <div id="status">
<div class="a" style="left:7.5px;top:3px;line-height:14px;font-size:11px">编辑</div>
<svg class="a" style="left:47px;top:3px" width="15" height="13" viewBox="0 0 15 13"><path d="M1 1h12v4M1 1v11h6M1 4h12" fill="none" stroke="#555" stroke-width="1.1"/><circle cx="10.5" cy="9" r="3.2" fill="none" stroke="#555" stroke-width="1.1"/><circle cx="10.5" cy="9" r="1.3" fill="#555"/></svg>
  </div><!--/status-->
















<!--wm--><div class="a" style="left:318.75px;top:242.2px;width:260.4px;height:19px;background:#fff;border:1px solid #c8c8c8;box-shadow:1px 1px 1px rgba(0,0,0,0.12);font-family:'Liberation Sans',sans-serif;font-size:11.7px;line-height:16px;color:#555;padding-left:5.5px">IF(logical_test, [value_if_true], <b style="color:#333">[value_if_false]</b>)</div>
<div class="a" id="wm" style="left:915px;top:639.5px;font-size:30px;line-height:36px;color:#fff;text-shadow:1.5px 1.5px 0 #000,2px 2px 0 #000">头条 <span style="font-size:35px;letter-spacing:2.4px">@Excel</span>技巧精选</div>
<!--/wm-->
</div>
</body></html>
